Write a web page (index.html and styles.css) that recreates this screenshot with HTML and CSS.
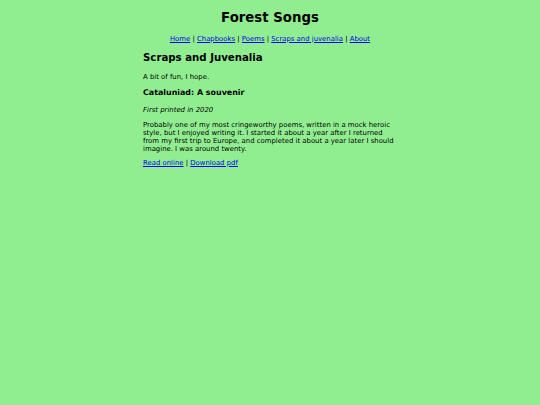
FILE: index.html
```html
<!DOCTYPE html>
<html lang="en">
<head>
<meta charset="utf-8">
<title>Forest Songs - Scraps and Juvenalia</title>
<link rel="stylesheet" href="styles.css">
</head>
<body>
<header class="site-header">
  <h1 class="site-title">Forest Songs</h1>
  <nav class="site-nav">
    <a href="#">Home</a> | <a href="#">Chapbooks</a> | <a href="#">Poems</a> | <a href="#">Scraps and juvenalia</a> | <a href="#">About</a>
  </nav>
</header>
<main class="content">
  <h2 class="page-title">Scraps and Juvenalia</h2>
  <p class="intro">A bit of fun, I hope.</p>
  <section class="work">
    <h3 class="work-title">Cataluniad: A souvenir</h3>
    <p class="work-date">First printed in 2020</p>
    <p class="work-desc">Probably one of my most cringeworthy poems, written in a mock heroic style, but I enjoyed writing it. I started it about a year after I returned from my first trip to Europe, and completed it about a year later I should imagine. I was around twenty.</p>
    <p class="work-links"><a href="#">Read online</a> | <a href="#">Download pdf</a></p>
  </section>
</main>
</body>
</html>
```
FILE: styles.css
```css
html, body {
  margin: 0;
  padding: 0;
}
body {
  background: #90ee90;
  color: #000;
  font-family: "DejaVu Sans", Verdana, sans-serif;
  font-size: 6.9px;
  line-height: 8px;
}
a {
  color: #0000ee;
}
.site-header {
  text-align: center;
  padding-top: 9.75px;
}
.site-title {
  font-size: 13.3px;
  line-height: 15.5px;
  margin: 0 0 9.5px;
}
.site-nav {
  margin: 0;
}
.content {
  max-width: 254px;
  margin: 0 auto;
}
.page-title {
  font-size: 10.2px;
  line-height: 11.9px;
  margin: 9.25px 0 9px;
}
.intro {
  margin: 9px 0 7.4px;
}
.work-title {
  font-size: 7.93px;
  line-height: 9.2px;
  margin: 7.4px 0 8.4px;
}
.work-date {
  font-style: italic;
  margin: 8.4px 0 7px;
}
.work-desc {
  margin: 7px 0 6px;
}
.work-links {
  margin: 6px 0;
}
```
